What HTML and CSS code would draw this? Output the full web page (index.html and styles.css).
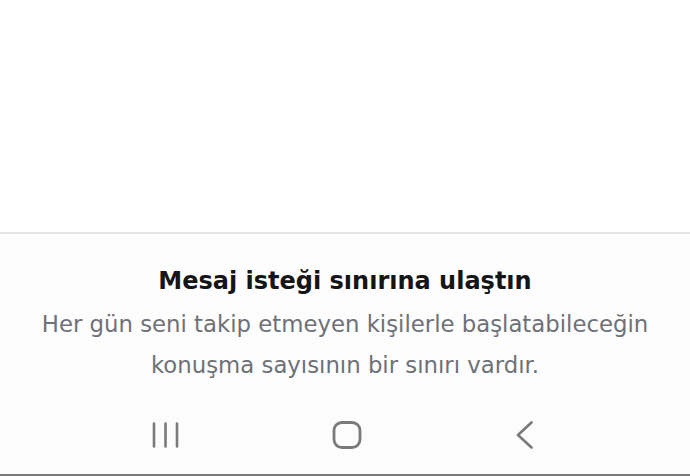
FILE: index.html
```html
<!DOCTYPE html>
<html lang="tr">
<head>
  <meta charset="UTF-8">
  <meta name="viewport" content="width=device-width, initial-scale=1.0">
  <title>Mesaj isteği</title>
  <link rel="stylesheet" href="styles.css">
</head>
<body>
  <div class="screen">
    <div class="blank"></div>

    <!-- Limit notice -->
    <div class="notice">
      <h2 class="notice-title">Mesaj isteği sınırına ulaştın</h2>
      <p class="notice-text">Her gün seni takip etmeyen kişilerle başlatabileceğin konuşma sayısının bir sınırı vardır.</p>
    </div>

    <!-- Android nav bar -->
    <div class="navbar">
      <svg class="nav-icon" width="29" height="28" viewBox="0 0 29 28">
        <path d="M3 2.5v23M14.5 2.5v23M26 2.5v23" stroke="#7a7a7a" stroke-width="2.6" stroke-linecap="round" fill="none"/>
      </svg>
      <svg class="nav-icon" width="30" height="28" viewBox="0 0 30 28">
        <rect x="2" y="1.5" width="26" height="25" rx="8" stroke="#7a7a7a" stroke-width="2.8" fill="none"/>
      </svg>
      <svg class="nav-icon" width="22" height="28" viewBox="0 0 22 28">
        <path d="M17.5 1.5L4 14l13.5 12.5" stroke="#7a7a7a" stroke-width="2.6" stroke-linecap="round" stroke-linejoin="round" fill="none"/>
      </svg>
    </div>
  </div>
</body>
</html>
```

FILE: styles.css
```css
body {
  margin: 0;
  background-color: #fff;
  font-family: "DejaVu Sans", Roboto, sans-serif;
}
.screen {
  width: 690px;
  height: 476px;
  display: flex;
  flex-direction: column;
  overflow: hidden;
}
.blank {
  height: 232px;
  background-color: #fff;
  border-bottom: 2px solid #e4e4e4;
  flex-shrink: 0;
}
.notice {
  background-color: #fdfdfd;
  text-align: center;
  padding-top: 27px;
  flex: 1;
}
.notice-title {
  margin: 0;
  font-size: 24px;
  font-weight: 700;
  color: #151515;
  line-height: 40px;
}
.notice-text {
  margin: 3px 30px 0;
  font-size: 22.8px;
  color: #6e7177;
  line-height: 41px;
}
.navbar {
  height: 78px;
  flex-shrink: 0;
  background-color: #fcfcfc;
  border-bottom: 2px solid #7a7a7a;
  display: flex;
  align-items: center;
  justify-content: space-between;
  padding: 0 154px 0 151px;
}
.nav-icon {
  display: block;
}
```
